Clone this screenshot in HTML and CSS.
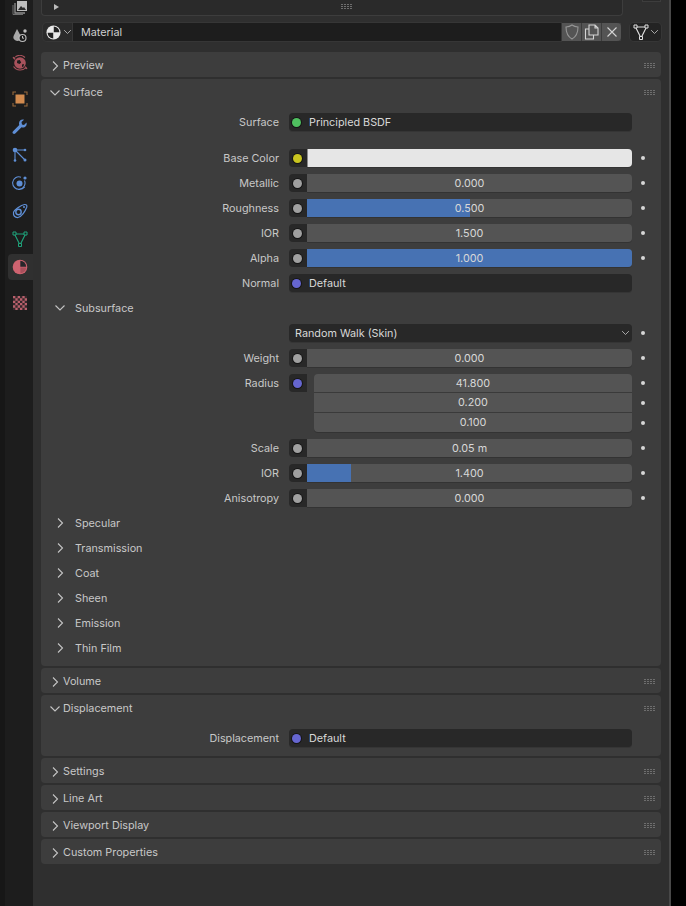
FILE: index.html
```html
<!DOCTYPE html>
<html lang="en">
<head>
<meta charset="utf-8">
<title>Material properties</title>
<link rel="stylesheet" href="styles.css">
</head>
<body>
<svg class="defs" width="0" height="0" aria-hidden="true">
  <symbol id="grip" viewBox="0 0 12 6">
    <path d="M0 .5h2M3 .5h2M6 .5h2M9 .5h2M0 2.5h2M3 2.5h2M6 2.5h2M9 2.5h2M0 4.5h2M3 4.5h2M6 4.5h2M9 4.5h2" stroke="#6e6e6e" stroke-width="1" fill="none"/>
  </symbol>
  <symbol id="right" viewBox="0 0 10 12"><path d="M3 1.500 7.500 6 3 10.500" fill="none" stroke="#c4c4c4" stroke-width="1.100"/></symbol>
  <symbol id="down" viewBox="0 0 12 10"><path d="M1.500 2.500 6 7l4.500-4.500" fill="none" stroke="#c4c4c4" stroke-width="1.100"/></symbol>
</svg>
<div class="app">
  <nav class="tabs">
    <div class="tab first"><svg viewBox="0 0 16 16" class="ico"><path d="M5 2h10v10H5z" fill="#bdbdbd"/><path d="M6 11l3-4 2 2 1-1 2 3z" fill="#2a2a2a"/><path d="M3 4v10h10" fill="none" stroke="#8f8f8f" stroke-width="1.300"/><path d="M1 6v9.500h10" fill="none" stroke="#6f6f6f" stroke-width="1"/></svg></div>
    <div class="tab"><svg viewBox="0 0 16 16" class="ico"><path d="M5 2 8 7.500A3.800 3.800 0 1 1 1.800 8.500z" fill="#a8a8a8"/><circle cx="13" cy="4" r="1.700" fill="#bdbdbd"/><circle cx="10.500" cy="11" r="3.500" fill="#1d1d1d" stroke="#bdbdbd" stroke-width="1.100"/><path d="M10.500 9v2.200H12" fill="none" stroke="#bdbdbd"/></svg></div>
    <div class="tab gap-after"><svg viewBox="0 0 16 16" class="ico"><circle cx="8" cy="8" r="5.800" fill="#a8525c"/><path d="M2.800 4.500 1 2.300l2.400 1M13.200 11.500l1.800 2.200-2.400-1M3.400 1.800A7.500 7.500 0 0 1 13 2.500M1.500 11.500c3 4.500 9.500 4.500 12.500 1" fill="none" stroke="#a8525c" stroke-width="1.100"/><path d="M5.200 5.500l2.600-.5 1.400 2.500-1.600 1.400-2.600-1zM10 9.500l2-.5-.5 2.500-1.500.5z" fill="#1d1d1d"/></svg></div>
    <div class="tab"><svg viewBox="0 0 16 16" class="ico"><path d="M1 4V1h3M12 1h3v3M15 12v3h-3M4 15H1v-3" fill="none" stroke="#9a6a3c" stroke-width="1.100"/><rect x="3.500" y="3.500" width="9" height="9" fill="#d28b4f"/></svg></div>
    <div class="tab"><svg viewBox="0 0 16 16" class="ico"><path d="M14.500 3.500 12 6l-2-.5L9.500 3 12 .8C9.500 0 7 1.800 7 4.500c0 .6.100 1 .3 1.500L1.300 12c-1 1-1 1.800-.3 2.500s1.600.7 2.500-.2l6-6c3 1 6-1.300 5-4.800z" fill="#5f8fd6"/></svg></div>
    <div class="tab"><svg viewBox="0 0 16 16" class="ico"><path d="M3 3v11M3 3l10 10M3 3h10" stroke="#5f8fd6" stroke-width="1.100" fill="none"/><circle cx="3" cy="3" r="2.300" fill="#5f8fd6"/><circle cx="13" cy="3" r="1.300" fill="#5f8fd6"/><circle cx="3" cy="13.500" r="1.300" fill="#5f8fd6"/><circle cx="13" cy="13" r="1.500" fill="#5f8fd6"/></svg></div>
    <div class="tab"><svg viewBox="0 0 16 16" class="ico"><circle cx="7.500" cy="8.500" r="3" fill="#5f8fd6"/><path d="M12.500 5.500a6.200 6.200 0 1 1-3.500-3.300M5 14c3 1 6 0 7.800-2" fill="none" stroke="#5f8fd6" stroke-width="1.100"/><circle cx="13" cy="3" r="1.600" fill="#5f8fd6"/></svg></div>
    <div class="tab"><svg viewBox="0 0 16 16" class="ico"><path d="M1.500 9.500C2 7 9 2 12.500 1.500c2-.2 2.800 1 2.200 2.800-1.500 4-5 9.700-8.700 10.200-3 .300-5-2-4.500-5z" fill="none" stroke="#5f8fd6" stroke-width="1.200"/><circle cx="6.500" cy="9" r="2.700" fill="none" stroke="#5f8fd6" stroke-width="1.400"/><circle cx="12" cy="4" r="1" fill="#5f8fd6"/></svg></div>
    <div class="tab"><svg viewBox="0 0 16 16" class="ico"><path d="M2.500 3h11L8 14z" fill="none" stroke="#1fa57c" stroke-width="1.100"/><path d="M1 1h3v3H1zM12 1h3v3h-3zM6.500 12.500h3v3h-3z" fill="#1d1d1d" stroke="#1fa57c"/></svg></div>
    <div class="tab active"><svg viewBox="0 0 16 16" class="ico"><circle cx="8" cy="8" r="7.300" fill="#cf6370"/><path d="M8.300 1.800a6 6 0 0 1 5.900 5.900H8.300z" fill="#26262a"/><path d="M8.400 8.500h5.800a6 6 0 0 1-5.800 5.700z" fill="#a84f5b"/></svg></div>
    <div class="tab"><svg viewBox="0 0 6 6" class="ico check"><rect width="6" height="6" fill="#b9606c"/><path d="M1 0h1v1H1zM3 0h1v1H3zM5 0h1v1H5zM0 1h1v1H0zM2 1h1v1H2zM4 1h1v1H4zM1 2h1v1H1zM3 2h1v1H3zM5 2h1v1H5zM0 3h1v1H0zM2 3h1v1H2zM4 3h1v1H4zM1 4h1v1H1zM3 4h1v1H3zM5 4h1v1H5zM0 5h1v1H0zM2 5h1v1H2zM4 5h1v1H4z" fill="#35282b"/></svg></div>
  </nav>

  <main class="main">
    <div class="topbar">
      <div class="topcard"><span class="play"></span><svg class="topgrip" viewBox="0 0 12 6"><use href="#grip"/></svg></div>
      <div class="topstub"></div>
    </div>

    <div class="matbar">
      <div class="matpick">
        <svg viewBox="0 0 16 16" class="ball"><circle cx="8" cy="8" r="7.500" fill="#e8e8e8"/><path d="M8.300 7.700h6A6.200 6.200 0 0 0 8.300 1.600zM7.700 8.300h-6A6.200 6.200 0 0 0 7.700 14.400z" fill="#222"/></svg>
        <svg class="chev" viewBox="0 0 12 10"><use href="#down"/></svg>
      </div>
      <div class="matname">Material</div>
      <div class="matbtns">
        <div class="mbtn"><svg viewBox="0 0 16 16" class="mico"><path d="M8 1c2 1.300 4 1.800 6 2 0 6-1.500 9.500-6 12C3.500 12.500 2 9 2 3c2-.2 4-.7 6-2z" fill="none" stroke="#969696" stroke-width="1.100"/></svg></div>
        <div class="mbtn"><svg viewBox="0 0 16 16" class="mico"><path d="M5 11V1h6l3 3v7zM11 1v3h3" fill="none" stroke="#d4d4d4" stroke-width="1.100"/><path d="M5 5H1.500v10h8v-4" fill="none" stroke="#d4d4d4" stroke-width="1.100"/></svg></div>
        <div class="mbtn"><svg viewBox="0 0 16 16" class="mico"><path d="M3.500 3.500l9 9M12.500 3.500l-9 9" stroke="#d4d4d4" stroke-width="1.100"/></svg></div>
      </div>
      <div class="meshpick">
        <svg viewBox="0 0 16 16" class="mico"><path d="M2.500 3h11L8 14z" fill="none" stroke="#e0e0e0" stroke-width="1.100"/><path d="M1 1h3v3H1zM12 1h3v3h-3zM6.500 12.500h3v3h-3z" fill="#222" stroke="#e0e0e0"/></svg>
        <svg class="chev" viewBox="0 0 12 10"><use href="#down"/></svg>
      </div>
    </div>

    <section class="panel">
      <header class="phead"><svg class="arrow" viewBox="0 0 10 12"><use href="#right"/></svg><span>Preview</span><svg class="grip" viewBox="0 0 12 6"><use href="#grip"/></svg></header>
    </section>

    <section class="panel">
      <header class="phead"><svg class="arrow" viewBox="0 0 12 10"><use href="#down"/></svg><span>Surface</span><svg class="grip" viewBox="0 0 12 6"><use href="#grip"/></svg></header>
      <div class="pbody">
        <div class="row wide-after"><label>Surface</label><div class="link"><i class="sock green"></i><span>Principled BSDF</span></div></div>
        <div class="row"><label>Base Color</label><div class="sbox"><i class="sock yellow"></i></div><div class="field color"></div><b class="dot"></b></div>
        <div class="row"><label>Metallic</label><div class="sbox"><i class="sock grey"></i></div><div class="field"><span>0.000</span></div><b class="dot"></b></div>
        <div class="row"><label>Roughness</label><div class="sbox"><i class="sock grey"></i></div><div class="field"><u style="width:50%"></u><span>0.500</span></div><b class="dot"></b></div>
        <div class="row"><label>IOR</label><div class="sbox"><i class="sock grey"></i></div><div class="field"><span>1.500</span></div><b class="dot"></b></div>
        <div class="row"><label>Alpha</label><div class="sbox"><i class="sock grey"></i></div><div class="field"><u style="width:100%"></u><span>1.000</span></div><b class="dot"></b></div>
        <div class="row"><label>Normal</label><div class="link"><i class="sock blue"></i><span>Default</span></div></div>
        <div class="sub"><svg class="arrow" viewBox="0 0 12 10"><use href="#down"/></svg><span>Subsurface</span></div>
        <div class="row"><label></label><div class="select"><span>Random Walk (Skin)</span><svg class="chev" viewBox="0 0 12 10"><use href="#down"/></svg></div><b class="dot"></b></div>
        <div class="row"><label>Weight</label><div class="sbox"><i class="sock grey"></i></div><div class="field"><span>0.000</span></div><b class="dot"></b></div>
        <div class="vec">
          <div class="row"><label>Radius</label><div class="sbox"><i class="sock blue"></i></div><div class="field vf top"><span>41.800</span></div><b class="dot"></b></div>
          <div class="row"><label></label><div class="field vf mid"><span>0.200</span></div><b class="dot"></b></div>
          <div class="row"><label></label><div class="field vf bot"><span>0.100</span></div><b class="dot"></b></div>
        </div>
        <div class="row"><label>Scale</label><div class="sbox"><i class="sock grey"></i></div><div class="field"><span>0.05 m</span></div><b class="dot"></b></div>
        <div class="row"><label>IOR</label><div class="sbox"><i class="sock grey"></i></div><div class="field"><u style="width:13.500%"></u><span>1.400</span></div><b class="dot"></b></div>
        <div class="row"><label>Anisotropy</label><div class="sbox"><i class="sock grey"></i></div><div class="field"><span>0.000</span></div><b class="dot"></b></div>
        <div class="sub"><svg class="arrow" viewBox="0 0 10 12"><use href="#right"/></svg><span>Specular</span></div>
        <div class="sub"><svg class="arrow" viewBox="0 0 10 12"><use href="#right"/></svg><span>Transmission</span></div>
        <div class="sub"><svg class="arrow" viewBox="0 0 10 12"><use href="#right"/></svg><span>Coat</span></div>
        <div class="sub"><svg class="arrow" viewBox="0 0 10 12"><use href="#right"/></svg><span>Sheen</span></div>
        <div class="sub"><svg class="arrow" viewBox="0 0 10 12"><use href="#right"/></svg><span>Emission</span></div>
        <div class="sub"><svg class="arrow" viewBox="0 0 10 12"><use href="#right"/></svg><span>Thin Film</span></div>
      </div>
    </section>

    <section class="panel">
      <header class="phead"><svg class="arrow" viewBox="0 0 10 12"><use href="#right"/></svg><span>Volume</span><svg class="grip" viewBox="0 0 12 6"><use href="#grip"/></svg></header>
    </section>
    <section class="panel">
      <header class="phead"><svg class="arrow" viewBox="0 0 12 10"><use href="#down"/></svg><span>Displacement</span><svg class="grip" viewBox="0 0 12 6"><use href="#grip"/></svg></header>
      <div class="pbody">
        <div class="row"><label>Displacement</label><div class="link"><i class="sock blue"></i><span>Default</span></div></div>
      </div>
    </section>
    <section class="panel">
      <header class="phead"><svg class="arrow" viewBox="0 0 10 12"><use href="#right"/></svg><span>Settings</span><svg class="grip" viewBox="0 0 12 6"><use href="#grip"/></svg></header>
    </section>
    <section class="panel">
      <header class="phead"><svg class="arrow" viewBox="0 0 10 12"><use href="#right"/></svg><span>Line Art</span><svg class="grip" viewBox="0 0 12 6"><use href="#grip"/></svg></header>
    </section>
    <section class="panel">
      <header class="phead"><svg class="arrow" viewBox="0 0 10 12"><use href="#right"/></svg><span>Viewport Display</span><svg class="grip" viewBox="0 0 12 6"><use href="#grip"/></svg></header>
    </section>
    <section class="panel">
      <header class="phead"><svg class="arrow" viewBox="0 0 10 12"><use href="#right"/></svg><span>Custom Properties</span><svg class="grip" viewBox="0 0 12 6"><use href="#grip"/></svg></header>
    </section>
  </main>
</div>
</body>
</html>
```
FILE: styles.css
```css
* { box-sizing: border-box; }
html, body { margin: 0; height: 100%; background: #000; }
body { font: 10.8px/11px Inter, "Liberation Sans", sans-serif; color: #d2d2d2; overflow: hidden; }
.defs { display: block; height: 0; }

.app { display: flex; width: 671px; height: 906px; background: #171717; padding-left: 5px; }

.tabs { width: 28px; background: #1d1d1d; display: flex; flex-direction: column; align-items: stretch; overflow: hidden; }
.tab { height: 28px; flex: none; display: flex; align-items: center; justify-content: center; padding-left: 2px; }
.tab.first { margin-top: -7px; }
.tab.gap-after { margin-bottom: 8px; }
.tab.active { height: 26px; margin: 1px 0 9px 3px; background: #303030; border-radius: 4px 0 0 4px; padding-left: 0; padding-right: 1px; }
.ico { width: 16px; height: 16px; display: block; }
.check { width: 14px; height: 14px; }

.main { flex: 1; min-width: 0; background: #2f2f2f; border-right: 2px solid #484848; padding: 0 8px 0 8px; }

.topbar { display: flex; height: 16px; align-items: flex-start; }
.topcard { width: 591px; height: 16px; background: #2a2a2a; border: 1px solid #3d3d3d; border-top: 0; border-radius: 0 0 4px 4px; display: flex; align-items: center; padding-bottom: 2px; }
.play { width: 0; height: 0; margin-left: 12px; border-left: 5px solid #bcbcbc; border-top: 3px solid transparent; border-bottom: 3px solid transparent; }
.topgrip { width: 12px; height: 6px; margin-left: 282px; }
.topstub { width: 19px; height: 2px; margin-left: 19px; background: #2a2a2a; border: 1px solid #3d3d3d; border-top: 0; }

.matbar { display: flex; height: 18px; margin: 7px 0 11px 2px; align-items: stretch; }
.matpick { width: 30px; background: #2a2a2a; border-radius: 4px 0 0 4px; display: flex; align-items: center; padding-left: 3px; box-shadow: 0 0 0 1px #363636; }
.ball { width: 15px; height: 15px; display: block; }
.chev { width: 9px; height: 8px; display: block; margin-left: 2px; flex: none; }
.matname { width: 488px; background: #1d1d1d; padding-left: 8px; display: flex; align-items: center; color: #cfcfcf; box-shadow: 0 0 0 1px #363636; }
.matbtns { display: flex; gap: 1px; background: #3c3c3c; margin-left: 1px; }
.mbtn { width: 19px; background: #545454; display: flex; align-items: center; justify-content: center; }
.mbtn:last-child { border-radius: 0 4px 4px 0; }
.mico { width: 16px; height: 16px; display: block; }
.meshpick { width: 31px; margin-left: 9px; background: #232323; border-radius: 4px; box-shadow: 0 0 0 1px #363636; display: flex; align-items: center; padding-left: 3px; }
.meshpick .chev { margin-left: 1px; }

.panel { width: 620px; background: #3d3d3d; border-radius: 4px; margin-bottom: 2px; }
.phead { height: 25px; display: flex; align-items: center; color: #c8c8c8; padding: 2px 0 0 8px; }
.phead .arrow { width: 12px; height: 12px; margin-right: 2px; }
.phead .grip { width: 12px; height: 6px; margin-left: auto; margin-right: 5px; }
.pbody { padding: 8px 0; display: flex; flex-direction: column; gap: 5px; }

.row { height: 20px; display: flex; align-items: center; }
.row.wide-after { margin-bottom: 11px; }
.row label { width: 238px; margin-right: 10px; text-align: right; color: #c8c8c8; flex: none; }

.sbox { width: 18px; height: 18px; flex: none; background: #282828; border-radius: 4px 0 0 4px; display: flex; align-items: center; justify-content: center; padding-right: 1px; }
.sock { display: block; width: 9px; height: 9px; border-radius: 50%; background: #9a9a9a; box-shadow: 0 0 0 1px #161616; }
.sock.green { background: #4fbf5f; }
.sock.yellow { background: #c9c520; }
.sock.grey { background: #a0a0a0; }
.sock.blue { background: #6666d0; }

.field { position: relative; width: 325px; height: 18px; flex: none; background: #545454; border-radius: 0 4px 4px 0; box-shadow: 0 1px 0 #333; display: flex; align-items: center; justify-content: center; overflow: hidden; color: #d8d8d8; }
.field span { position: relative; }
.field u { position: absolute; left: 0; top: 0; bottom: 0; background: #4772b3; }
.field.color { background: #e6e6e6; border-left: 1px solid #8a8a8a; }

.link, .select { width: 343px; height: 18px; flex: none; background: #282828; border-radius: 4px; box-shadow: 0 1px 0 #353535; display: flex; align-items: center; color: #d8d8d8; }
.link { padding-left: 3px; }
.link .sock { margin-right: 8px; }
.select { padding: 0 2px 0 6px; justify-content: space-between; }

.vec { display: flex; flex-direction: column; }
.field.vf { width: 318px; margin-left: 7px; box-shadow: none; border-radius: 0; }
.vec .row:not(:first-child) .vf { margin-left: 25px; }
.field.vf.top { height: 19px; align-self: flex-end; border-bottom: 1px solid #3a3a3a; border-radius: 4px 4px 0 0; }
.field.vf.mid { height: 20px; border-bottom: 1px solid #3a3a3a; }
.field.vf.bot { height: 19px; align-self: flex-start; border-radius: 0 0 4px 4px; box-shadow: 0 1px 0 #333; }

.dot { width: 4px; height: 4px; flex: none; margin-left: 9px; border-radius: 50%; background: #d6d6d6; }

.sub { height: 20px; display: flex; align-items: center; padding-left: 13px; color: #c8c8c8; }
.sub .arrow { width: 12px; height: 12px; margin-right: 9px; }
```
